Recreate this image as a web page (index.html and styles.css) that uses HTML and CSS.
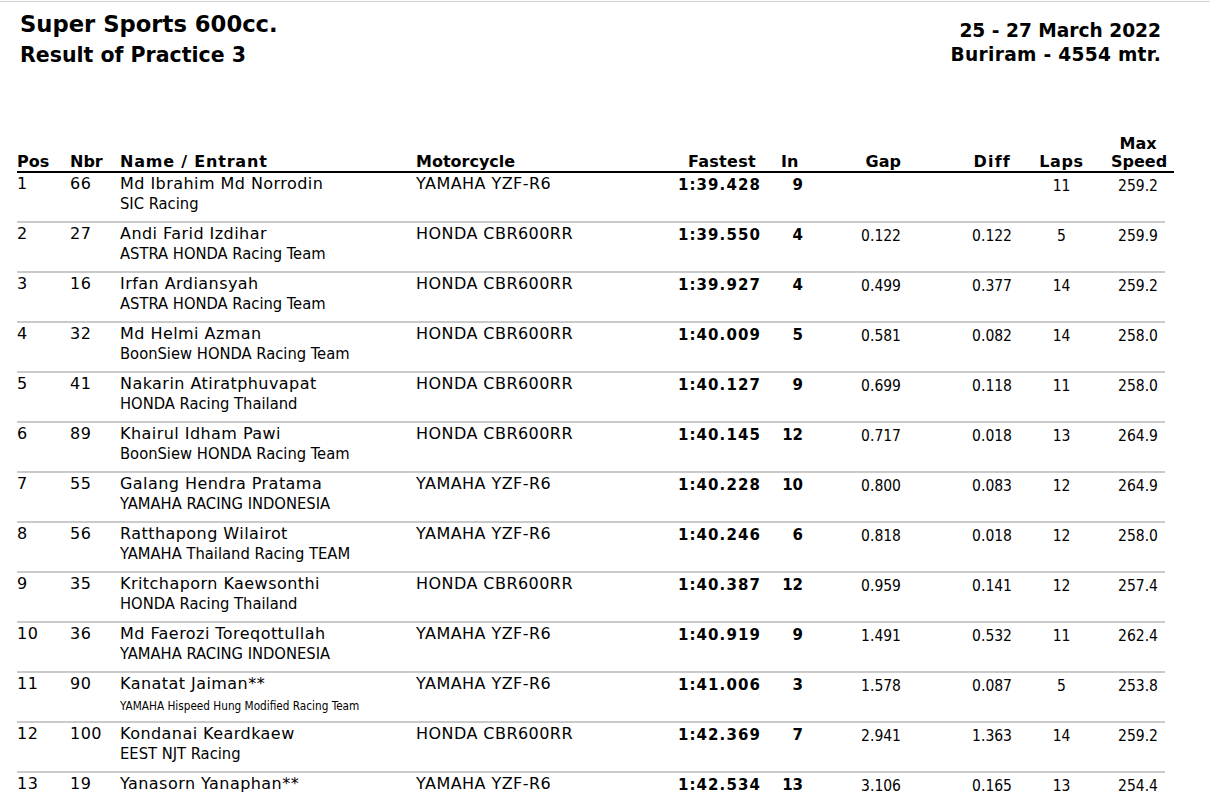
FILE: index.html
```html
<!DOCTYPE html>
<html lang="en">
<head>
<meta charset="utf-8">
<title>Super Sports 600cc. - Result of Practice 3</title>
<link rel="stylesheet" href="styles.css">
</head>
<body>
<div class="sheet">
  <header class="head">
    <div class="head-left">
      <div class="title">Super Sports 600cc.</div>
      <div class="subtitle">Result of Practice 3</div>
    </div>
    <div class="head-right">
      <div>25 - 27 March 2022</div>
      <div>Buriram - 4554 mtr.</div>
    </div>
  </header>

  <div class="results">
    <div class="row hdr">
      <div class="c-pos">Pos</div>
      <div class="c-nbr">Nbr</div>
      <div class="c-name">Name / Entrant</div>
      <div class="c-moto">Motorcycle</div>
      <div class="c-fast">Fastest</div>
      <div class="c-in">In</div>
      <div class="c-gap">Gap</div>
      <div class="c-diff">Diff</div>
      <div class="c-laps">Laps</div>
      <div class="c-spd">Max<br>Speed</div>
    </div>

    <div class="row">
      <div class="c-pos">1</div><div class="c-nbr">66</div>
      <div class="c-name"><div class="rider">Md Ibrahim Md Norrodin</div><div class="team">SIC Racing</div></div>
      <div class="c-moto">YAMAHA YZF-R6</div><div class="c-fast">1:39.428</div><div class="c-in">9</div>
      <div class="c-gap num"></div><div class="c-diff num"></div><div class="c-laps num">11</div><div class="c-spd num">259.2</div>
    </div>
    <div class="row">
      <div class="c-pos">2</div><div class="c-nbr">27</div>
      <div class="c-name"><div class="rider">Andi Farid Izdihar</div><div class="team">ASTRA HONDA Racing Team</div></div>
      <div class="c-moto">HONDA CBR600RR</div><div class="c-fast">1:39.550</div><div class="c-in">4</div>
      <div class="c-gap num">0.122</div><div class="c-diff num">0.122</div><div class="c-laps num">5</div><div class="c-spd num">259.9</div>
    </div>
    <div class="row">
      <div class="c-pos">3</div><div class="c-nbr">16</div>
      <div class="c-name"><div class="rider">Irfan Ardiansyah</div><div class="team">ASTRA HONDA Racing Team</div></div>
      <div class="c-moto">HONDA CBR600RR</div><div class="c-fast">1:39.927</div><div class="c-in">4</div>
      <div class="c-gap num">0.499</div><div class="c-diff num">0.377</div><div class="c-laps num">14</div><div class="c-spd num">259.2</div>
    </div>
    <div class="row">
      <div class="c-pos">4</div><div class="c-nbr">32</div>
      <div class="c-name"><div class="rider">Md Helmi Azman</div><div class="team">BoonSiew HONDA Racing Team</div></div>
      <div class="c-moto">HONDA CBR600RR</div><div class="c-fast">1:40.009</div><div class="c-in">5</div>
      <div class="c-gap num">0.581</div><div class="c-diff num">0.082</div><div class="c-laps num">14</div><div class="c-spd num">258.0</div>
    </div>
    <div class="row">
      <div class="c-pos">5</div><div class="c-nbr">41</div>
      <div class="c-name"><div class="rider">Nakarin Atiratphuvapat</div><div class="team">HONDA Racing Thailand</div></div>
      <div class="c-moto">HONDA CBR600RR</div><div class="c-fast">1:40.127</div><div class="c-in">9</div>
      <div class="c-gap num">0.699</div><div class="c-diff num">0.118</div><div class="c-laps num">11</div><div class="c-spd num">258.0</div>
    </div>
    <div class="row">
      <div class="c-pos">6</div><div class="c-nbr">89</div>
      <div class="c-name"><div class="rider">Khairul Idham Pawi</div><div class="team">BoonSiew HONDA Racing Team</div></div>
      <div class="c-moto">HONDA CBR600RR</div><div class="c-fast">1:40.145</div><div class="c-in">12</div>
      <div class="c-gap num">0.717</div><div class="c-diff num">0.018</div><div class="c-laps num">13</div><div class="c-spd num">264.9</div>
    </div>
    <div class="row">
      <div class="c-pos">7</div><div class="c-nbr">55</div>
      <div class="c-name"><div class="rider">Galang Hendra Pratama</div><div class="team">YAMAHA RACING INDONESIA</div></div>
      <div class="c-moto">YAMAHA YZF-R6</div><div class="c-fast">1:40.228</div><div class="c-in">10</div>
      <div class="c-gap num">0.800</div><div class="c-diff num">0.083</div><div class="c-laps num">12</div><div class="c-spd num">264.9</div>
    </div>
    <div class="row">
      <div class="c-pos">8</div><div class="c-nbr">56</div>
      <div class="c-name"><div class="rider">Ratthapong Wilairot</div><div class="team">YAMAHA Thailand Racing TEAM</div></div>
      <div class="c-moto">YAMAHA YZF-R6</div><div class="c-fast">1:40.246</div><div class="c-in">6</div>
      <div class="c-gap num">0.818</div><div class="c-diff num">0.018</div><div class="c-laps num">12</div><div class="c-spd num">258.0</div>
    </div>
    <div class="row">
      <div class="c-pos">9</div><div class="c-nbr">35</div>
      <div class="c-name"><div class="rider">Kritchaporn Kaewsonthi</div><div class="team">HONDA Racing Thailand</div></div>
      <div class="c-moto">HONDA CBR600RR</div><div class="c-fast">1:40.387</div><div class="c-in">12</div>
      <div class="c-gap num">0.959</div><div class="c-diff num">0.141</div><div class="c-laps num">12</div><div class="c-spd num">257.4</div>
    </div>
    <div class="row">
      <div class="c-pos">10</div><div class="c-nbr">36</div>
      <div class="c-name"><div class="rider">Md Faerozi Toreqottullah</div><div class="team">YAMAHA RACING INDONESIA</div></div>
      <div class="c-moto">YAMAHA YZF-R6</div><div class="c-fast">1:40.919</div><div class="c-in">9</div>
      <div class="c-gap num">1.491</div><div class="c-diff num">0.532</div><div class="c-laps num">11</div><div class="c-spd num">262.4</div>
    </div>
    <div class="row">
      <div class="c-pos">11</div><div class="c-nbr">90</div>
      <div class="c-name"><div class="rider">Kanatat Jaiman**</div><div class="team small">YAMAHA Hispeed Hung Modified Racing Team</div></div>
      <div class="c-moto">YAMAHA YZF-R6</div><div class="c-fast">1:41.006</div><div class="c-in">3</div>
      <div class="c-gap num">1.578</div><div class="c-diff num">0.087</div><div class="c-laps num">5</div><div class="c-spd num">253.8</div>
    </div>
    <div class="row">
      <div class="c-pos">12</div><div class="c-nbr">100</div>
      <div class="c-name"><div class="rider">Kondanai Keardkaew</div><div class="team">EEST NJT Racing</div></div>
      <div class="c-moto">HONDA CBR600RR</div><div class="c-fast">1:42.369</div><div class="c-in">7</div>
      <div class="c-gap num">2.941</div><div class="c-diff num">1.363</div><div class="c-laps num">14</div><div class="c-spd num">259.2</div>
    </div>
    <div class="row">
      <div class="c-pos">13</div><div class="c-nbr">19</div>
      <div class="c-name"><div class="rider">Yanasorn Yanaphan**</div><div class="team">&nbsp;</div></div>
      <div class="c-moto">YAMAHA YZF-R6</div><div class="c-fast">1:42.534</div><div class="c-in">13</div>
      <div class="c-gap num">3.106</div><div class="c-diff num">0.165</div><div class="c-laps num">13</div><div class="c-spd num">254.4</div>
    </div>
  </div>
</div>
</body>
</html>
```

FILE: styles.css
```css
html, body {
  margin: 0;
  padding: 0;
  background: #ffffff;
}

body {
  font-family: "DejaVu Sans", Verdana, sans-serif;
  color: #000;
  overflow: hidden;
}

.sheet {
  margin-top: 1px;
  border-top: 1px solid #d2d2d2;
  width: 1210px;
}

.head {
  display: flex;
  justify-content: space-between;
  align-items: flex-start;
  padding: 7px 49px 0 20px;
  font-weight: bold;
}

.title {
  font-size: 22.7px;
  line-height: 31px;
}

.subtitle {
  font-size: 20.5px;
  line-height: 31px;
}

.head-right {
  padding-top: 10px;
  font-size: 18.6px;
  line-height: 24px;
  text-align: right;
}

.head-right div:last-child {
  letter-spacing: 0.3px;
}

.results {
  margin: 64px 0 0 17px;
  width: 1157px;
}

.row {
  display: grid;
  grid-template-columns: 53px 50px 296px 224px 120px 43px 98px 111px 99px 54px;
  height: 48px;
  width: 1148px;
  border-bottom: 2px solid #cacaca;
  font-size: 16px;
  letter-spacing: 0.45px;
  line-height: 20px;
}

.row:not(.hdr) .c-pos,
.row:not(.hdr) .c-nbr,
.row:not(.hdr) .c-name,
.row:not(.hdr) .c-moto {
  padding-top: 1px;
}

.row.hdr {
  height: auto;
  width: 1148px;
  padding-right: 9px;
  border-bottom: 2px solid #000;
  align-items: end;
  font-weight: bold;
  letter-spacing: 0;
  line-height: 18px;
}

.hdr .c-name {
  letter-spacing: 0.8px;
}

.hdr .c-fast {
  padding-right: 4px;
  letter-spacing: 0.3px;
}

.hdr .c-in {
  text-align: left;
  padding-left: 21px;
}

.hdr .c-diff {
  letter-spacing: 1.2px;
  padding-right: 1px;
}

.hdr .c-laps {
  letter-spacing: 0.6px;
}

.c-fast, .c-in, .c-gap, .c-diff {
  text-align: right;
}

.c-laps, .c-spd {
  text-align: center;
}

.row:not(.hdr) .c-fast,
.row:not(.hdr) .c-in {
  font-weight: bold;
  font-size: 15px;
  letter-spacing: 0;
  padding-top: 1.5px;
}

.row:not(.hdr) .c-fast {
  letter-spacing: 1.1px;
  margin-right: -1px;
}

.num {
  font-family: "DejaVu Sans Condensed", "DejaVu Sans", sans-serif;
  font-stretch: condensed;
  font-size: 15.5px;
  letter-spacing: 0;
  padding-top: 2.5px;
}

.team {
  font-family: "DejaVu Sans Condensed", "DejaVu Sans", sans-serif;
  font-stretch: condensed;
  font-size: 16.4px;
  letter-spacing: 0;
}

.team.small {
  font-size: 11.7px;
  padding-top: 2px;
}
```
